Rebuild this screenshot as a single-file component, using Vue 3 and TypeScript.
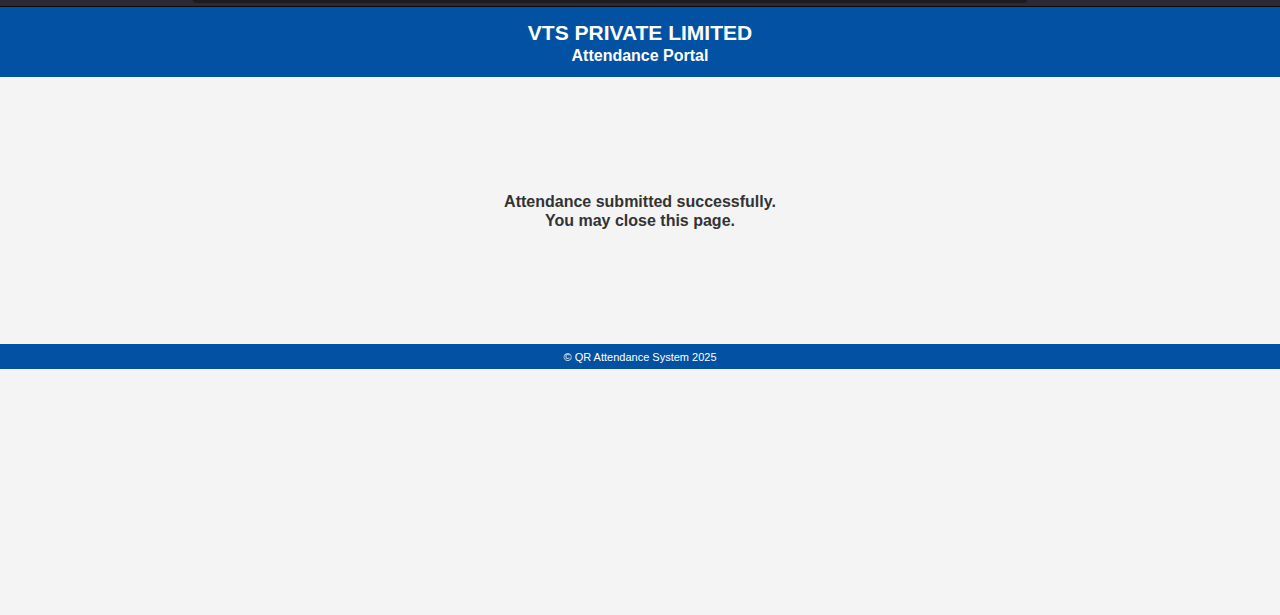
<script setup lang="ts">
const company: string = 'VTS PRIVATE LIMITED'
const year: number = 2025
</script>

<template>
  <div class="page">
    <div class="browser-edge"><div class="address-bar"></div></div>
    <header class="header">
      <h1>{{ company }}</h1>
      <h2>Attendance Portal</h2>
    </header>
    <main class="message">
      <h3>Attendance submitted successfully.<br />You may close this page.</h3>
    </main>
    <footer class="footer">© QR Attendance System {{ year }}</footer>
  </div>
</template>

<style>
body {
  margin: 0;
  background: #f4f4f4;
}
</style>

<style scoped>
.page {
  font-family: "Liberation Sans", Arial, sans-serif;
  text-align: center;
}
.browser-edge {
  height: 6px;
  padding: 0 253px 0 193px;
  background: #2b2a33;
  border-bottom: 1px solid #0c0c0d;
}
.address-bar {
  height: 3px;
  background: #1c1b22;
  border-radius: 0 0 3px 3px;
}
.header {
  padding: 13px 0 12px;
  background: #0251a3;
  color: #fff;
}
h1,
h2,
h3 {
  margin: 0;
  font-weight: 700;
}
h1 {
  font-size: 21px;
  line-height: 26px;
}
h2 {
  font-size: 16px;
  line-height: 19px;
}
.message {
  padding: 115px 16px 114px;
  color: #333;
}
h3 {
  font-size: 16px;
  line-height: 19px;
}
.footer {
  padding: 7px 0 5px;
  background: #0251a3;
  color: #fff;
  font-size: 11px;
  line-height: 13px;
}
</style>
